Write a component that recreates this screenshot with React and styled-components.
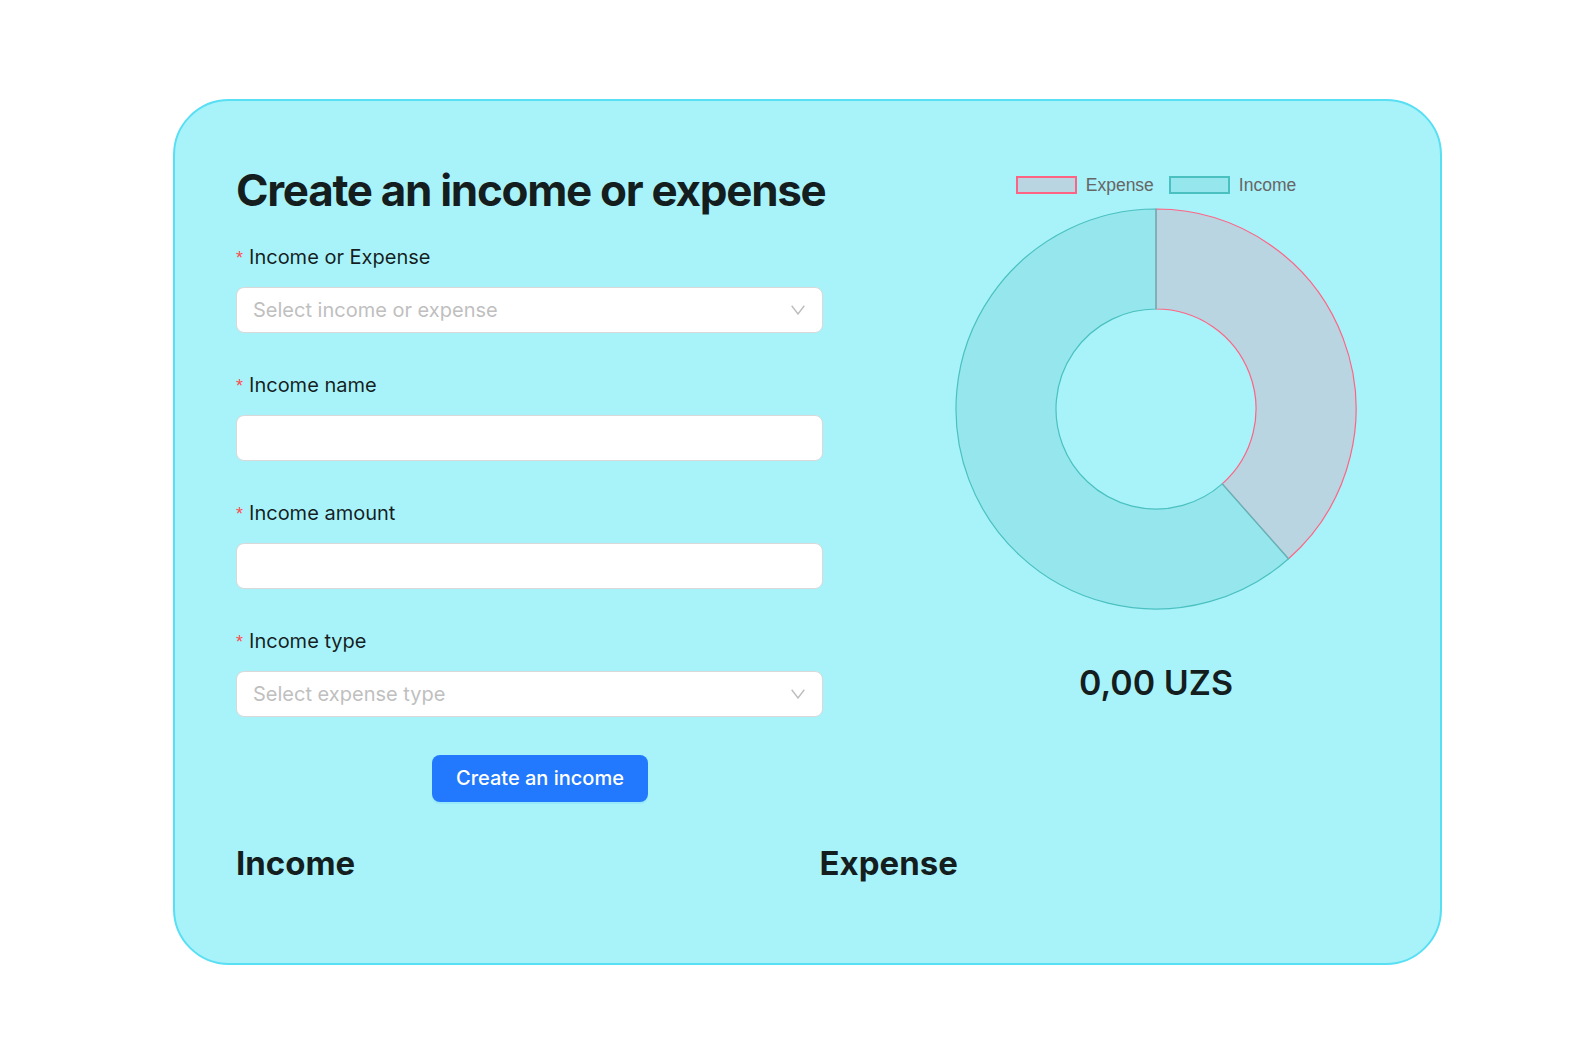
import React from "react";
import styled, { createGlobalStyle } from "styled-components";

const GlobalStyle = createGlobalStyle`
  html, body {
    margin: 0;
    padding: 0;
    background: #ffffff;
  }
  body {
    font-family: Inter, "Noto Sans", "Liberation Sans", sans-serif;
    color: rgba(0, 0, 0, 0.88);
  }
  * { box-sizing: border-box; }
`;

const Card = styled.div`
  margin: 99px 0 0 173px;
  width: 1269px;
  border: 2px solid #58dff4;
  border-radius: 56px;
  background: #a8f2f9;
  padding: 63px 61px 80px;
`;

const TopRow = styled.div`
  display: flex;
  gap: 110px;
`;

const FormColumn = styled.div`
  width: 587px;
  flex: none;
`;

const Title = styled.h1`
  margin: 0 0 26px;
  font-size: 44px;
  line-height: 1.2;
  font-weight: 700;
  letter-spacing: -1.3px;
  white-space: nowrap;
  color: rgba(0, 0, 0, 0.88);
`;

const FormItem = styled.div`
  margin-bottom: 38px;
`;

const Label = styled.label`
  display: flex;
  align-items: center;
  height: 28px;
  margin-bottom: 16px;
  font-size: 20px;
  line-height: 28px;
  color: rgba(0, 0, 0, 0.88);
`;

const Required = styled.span`
  color: #ff4d4f;
  font-family: "Liberation Sans", Arial, sans-serif;
  font-size: 18px;
  line-height: 1;
  margin-right: 6px;
  align-self: flex-start;
  margin-top: 6px;
`;

const TextInput = styled.input`
  display: block;
  width: 100%;
  height: 46px;
  padding: 0 16px;
  border: 1px solid #d9d9d9;
  border-radius: 8px;
  background: #ffffff;
  font-family: inherit;
  font-size: 20px;
  outline: none;
`;

const SelectBox = styled.div`
  display: flex;
  align-items: center;
  justify-content: space-between;
  width: 100%;
  height: 46px;
  padding: 0 17px 0 16px;
  border: 1px solid #d9d9d9;
  border-radius: 8px;
  background: #ffffff;
  cursor: pointer;
`;

const Placeholder = styled.span`
  font-size: 20px;
  color: #bfbfbf;
`;

const Chevron = () => (
  <svg width="14" height="10" viewBox="0 0 14 10" fill="none">
    <polyline points="0.7,0.8 7,9 13.3,0.8" stroke="#bdbdbd" strokeWidth="1.4" strokeLinejoin="miter" />
  </svg>
);

const PrimaryButton = styled.button`
  display: block;
  margin-left: 196px;
  height: 47px;
  padding: 0 24px;
  border: none;
  border-radius: 8px;
  background: #2279fd;
  color: #ffffff;
  font-family: inherit;
  font-size: 20px;
  font-weight: 500;
  box-shadow: 0 2px 0 rgba(5, 145, 255, 0.1);
  cursor: pointer;
`;

const ChartColumn = styled.div`
  flex: 1;
  display: flex;
  flex-direction: column;
  align-items: center;
  padding-top: 12px;
`;

const Legend = styled.div`
  display: flex;
  align-items: center;
  gap: 15px;
  height: 18px;
`;

const LegendItem = styled.div`
  display: flex;
  align-items: center;
  gap: 9px;
`;

const LegendBox = styled.span`
  width: 61px;
  height: 18px;
  border: 2px solid ${(p) => p.$stroke};
  background: ${(p) => p.$fill};
`;

const LegendText = styled.span`
  font-family: "Liberation Sans", Arial, sans-serif;
  font-size: 17.5px;
  color: #666666;
`;

const DonutSvg = styled.svg`
  display: block;
  margin-top: 14px;
`;

const Amount = styled.div`
  margin-top: 53px;
  font-size: 34px;
  line-height: 1.2;
  font-weight: 600;
  color: rgba(0, 0, 0, 0.88);
`;

const BottomRow = styled.div`
  display: grid;
  grid-template-columns: 1fr 1fr;
  column-gap: 24px;
  margin-top: 42px;
`;

const SectionHeading = styled.h2`
  margin: 0;
  font-size: 33px;
  line-height: 1.2;
  font-weight: 700;
  color: rgba(0, 0, 0, 0.88);
`;

const EXPENSE = { stroke: "rgb(255, 99, 132)", fill: "rgba(255, 99, 132, 0.2)" };
const INCOME = { stroke: "rgb(75, 192, 192)", fill: "rgba(75, 192, 192, 0.2)" };

function Donut() {
  const c = 201;
  const R = 200;
  const r = 100;
  const theta = (138.5 * Math.PI) / 180;
  const ox = c + R * Math.sin(theta);
  const oy = c - R * Math.cos(theta);
  const ix = c + r * Math.sin(theta);
  const iy = c - r * Math.cos(theta);
  const expensePath = `M ${c} ${c - R} A ${R} ${R} 0 0 1 ${ox} ${oy} L ${ix} ${iy} A ${r} ${r} 0 0 0 ${c} ${c - r} Z`;
  const incomePath = `M ${ox} ${oy} A ${R} ${R} 0 1 1 ${c} ${c - R} L ${c} ${c - r} A ${r} ${r} 0 1 0 ${ix} ${iy} Z`;
  return (
    <DonutSvg width="402" height="402" viewBox="0 0 402 402">
      <path d={expensePath} fill={EXPENSE.fill} stroke={EXPENSE.stroke} strokeWidth="1.2" />
      <path d={incomePath} fill={INCOME.fill} stroke={INCOME.stroke} strokeWidth="1.2" />
    </DonutSvg>
  );
}

function Field({ label, children }) {
  return (
    <FormItem>
      <Label>
        <Required>*</Required>
        {label}
      </Label>
      {children}
    </FormItem>
  );
}

export default function App() {
  return (
    <>
      <GlobalStyle />
      <Card>
        <TopRow>
          <FormColumn>
            <Title>Create an income or expense</Title>
            <Field label="Income or Expense">
              <SelectBox>
                <Placeholder>Select income or expense</Placeholder>
                <Chevron />
              </SelectBox>
            </Field>
            <Field label="Income name">
              <TextInput type="text" />
            </Field>
            <Field label="Income amount">
              <TextInput type="text" />
            </Field>
            <Field label="Income type">
              <SelectBox>
                <Placeholder>Select expense type</Placeholder>
                <Chevron />
              </SelectBox>
            </Field>
            <PrimaryButton type="button">Create an income</PrimaryButton>
          </FormColumn>
          <ChartColumn>
            <Legend>
              <LegendItem>
                <LegendBox $stroke={EXPENSE.stroke} $fill={EXPENSE.fill} />
                <LegendText>Expense</LegendText>
              </LegendItem>
              <LegendItem>
                <LegendBox $stroke={INCOME.stroke} $fill={INCOME.fill} />
                <LegendText>Income</LegendText>
              </LegendItem>
            </Legend>
            <Donut />
            <Amount>0,00 UZS</Amount>
          </ChartColumn>
        </TopRow>
        <BottomRow>
          <SectionHeading>Income</SectionHeading>
          <SectionHeading>Expense</SectionHeading>
        </BottomRow>
      </Card>
    </>
  );
}
